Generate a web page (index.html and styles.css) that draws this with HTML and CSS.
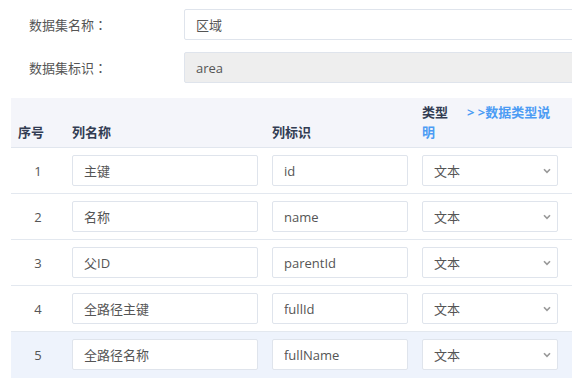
FILE: index.html
```html
<!doctype html>
<html>
<head>
<meta charset="utf-8">
<title>数据集</title>
<link rel="stylesheet" href="styles.css">
</head>
<body>
<div class="form">
	<div class="form-row">
		<label class="form-label">数据集名称<span class="colon">：</span></label>
		<input class="ipt ipt-wide" type="text" value="区域">
	</div>
	<div class="form-row">
		<label class="form-label">数据集标识<span class="colon">：</span></label>
		<input class="ipt ipt-wide ipt-disabled" type="text" value="area" readonly>
	</div>
</div>
<table class="cols">
	<colgroup>
		<col class="c-no">
		<col class="c-name">
		<col class="c-key">
		<col class="c-type">
		<col class="c-op">
	</colgroup>
	<thead>
		<tr>
			<th class="no">序号</th>
			<th>列名称</th>
			<th>列标识</th>
			<th>类型<a href="javascript:;" class="type-link">&gt; &gt;数据类型说明</a></th>
			<th></th>
		</tr>
	</thead>
	<tbody>
		<tr>
			<td class="no">1</td>
			<td><input class="ipt ipt-name" type="text" value="主键"></td>
			<td><input class="ipt ipt-key" type="text" value="id"></td>
			<td><span class="sel"><select><option>文本</option></select><svg viewBox="0 0 8 6" width="8" height="6"><path d="M1 1.2 L4 4.4 L7 1.2" fill="none" stroke="#999" stroke-width="1.6"/></svg></span></td>
			<td></td>
		</tr>
		<tr>
			<td class="no">2</td>
			<td><input class="ipt ipt-name" type="text" value="名称"></td>
			<td><input class="ipt ipt-key" type="text" value="name"></td>
			<td><span class="sel"><select><option>文本</option></select><svg viewBox="0 0 8 6" width="8" height="6"><path d="M1 1.2 L4 4.4 L7 1.2" fill="none" stroke="#999" stroke-width="1.6"/></svg></span></td>
			<td></td>
		</tr>
		<tr>
			<td class="no">3</td>
			<td><input class="ipt ipt-name" type="text" value="父ID"></td>
			<td><input class="ipt ipt-key" type="text" value="parentId"></td>
			<td><span class="sel"><select><option>文本</option></select><svg viewBox="0 0 8 6" width="8" height="6"><path d="M1 1.2 L4 4.4 L7 1.2" fill="none" stroke="#999" stroke-width="1.6"/></svg></span></td>
			<td></td>
		</tr>
		<tr>
			<td class="no">4</td>
			<td><input class="ipt ipt-name" type="text" value="全路径主键"></td>
			<td><input class="ipt ipt-key" type="text" value="fullId"></td>
			<td><span class="sel"><select><option>文本</option></select><svg viewBox="0 0 8 6" width="8" height="6"><path d="M1 1.2 L4 4.4 L7 1.2" fill="none" stroke="#999" stroke-width="1.6"/></svg></span></td>
			<td></td>
		</tr>
		<tr class="on">
			<td class="no">5</td>
			<td><input class="ipt ipt-name" type="text" value="全路径名称"></td>
			<td><input class="ipt ipt-key" type="text" value="fullName"></td>
			<td><span class="sel"><select><option>文本</option></select><svg viewBox="0 0 8 6" width="8" height="6"><path d="M1 1.2 L4 4.4 L7 1.2" fill="none" stroke="#999" stroke-width="1.6"/></svg></span></td>
			<td></td>
		</tr>
	</tbody>
</table>
</body>
</html>
```

FILE: styles.css
```css
*{margin:0; padding:0; box-sizing:border-box;}
html,body{width:572px; height:381px; overflow:hidden; background:#fff;}
body{font-family:"Open Sans","Noto Sans CJK SC",sans-serif; font-size:13px; color:#555;}
a{text-decoration:none;}

.form{padding:9px 0 0 29px; display:flex; flex-direction:column; gap:12px;}
.form-row{display:flex; align-items:center; height:31px;}
.form-label{width:155px; flex-shrink:0; color:#555; line-height:20px;}
.colon{font-family:"Noto Sans CJK TC",sans-serif;}

.ipt{height:31px; border:1px solid #dfe4ec; border-radius:2px; background:#fff; padding:0 11px; font:inherit; color:#555; outline:none;}
.ipt-wide{width:420px; flex-shrink:0;}
.ipt-disabled{background:#eeeeee; color:#555;}
.ipt-name{width:186px;}
.ipt-key{width:136px;}

.cols{margin:15px 0 0 11px; border-collapse:collapse; table-layout:fixed; width:611px;}
.c-no{width:54px;}
.c-name{width:200px;}
.c-key{width:150px;}
.c-type{width:150px;}
.c-op{width:57px;}
.cols th{background:#f4f5fa; color:#323c52; font-weight:bold; text-align:left; vertical-align:bottom; line-height:20px; padding:4px 7px 5px; border-bottom:1px solid #e1e6ee;}
.type-link{color:#4c9cf4; font-weight:bold; margin-left:19px;}
.cols td{padding:7px; border-bottom:1px solid #e3e8ef; vertical-align:middle;}
.cols td.no{text-align:center; color:#555;}
.cols tr.on td{background:#eef3fc; border-bottom-color:#eef3fc;}

.sel{position:relative; display:block; width:136px; height:31px;}
.sel select{width:136px; height:31px; border:1px solid #dfe4ec; border-radius:2px; background:#fff; padding:0 11px; font:inherit; color:#555; appearance:none; -webkit-appearance:none; outline:none;}
.sel svg{position:absolute; right:7px; top:13px;}
```
